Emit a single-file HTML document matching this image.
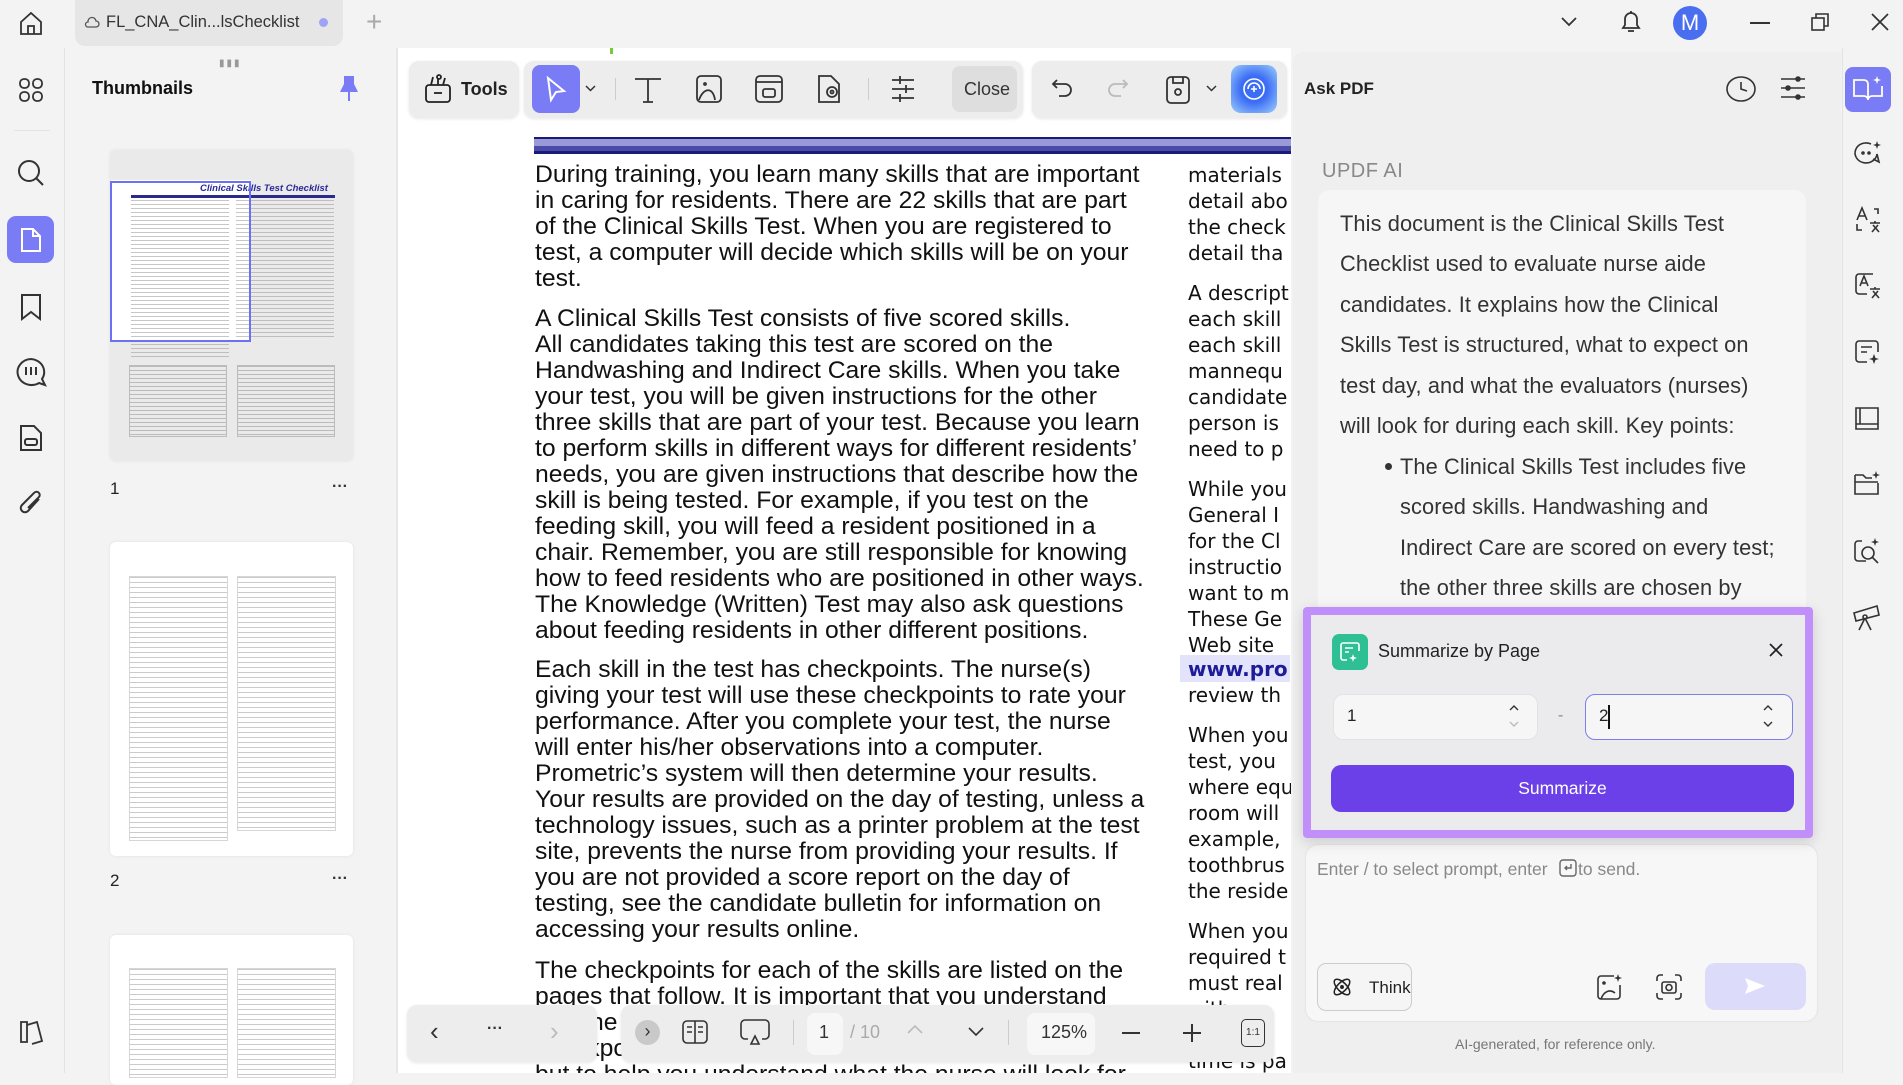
<!DOCTYPE html>
<html><head><meta charset="utf-8"><style>
*{margin:0;padding:0;box-sizing:border-box}
body{width:1903px;height:1073px;overflow:hidden;background:#f3f3f3;font-family:"Liberation Sans",sans-serif;position:relative;color:#222}
.a{position:absolute}
svg{position:absolute;overflow:visible}
.ln{position:absolute;white-space:nowrap;font-size:24px;line-height:26px;color:#111;transform:scaleX(1.03);transform-origin:0 0}
.c2{position:absolute;white-space:nowrap;font-family:"DejaVu Sans",sans-serif;font-size:20px;line-height:26px;color:#111}
.ai{position:absolute;white-space:nowrap;font-size:21.8px;color:#333;letter-spacing:.1px}
.thumb{position:absolute;background:#fff;border-radius:6px;box-shadow:0 0 3px rgba(0,0,0,.08)}
.tx{position:absolute;background:repeating-linear-gradient(#999 0 1px,transparent 1px 4px);opacity:.55}
</style></head><body>
<!-- top bar -->
<svg style="left:18px;top:10px" width="26" height="26" viewBox="0 0 26 26" fill="none" stroke="#333" stroke-width="1.8"><path d="M3 12 L13 3 L23 12 V24 H3 Z"/><path d="M10 24 V16 H16 V24"/></svg>
<div class="a" style="left:75px;top:0;width:268px;height:46px;background:#e6e6e6;border-radius:0 0 10px 10px"></div>
<svg style="left:84px;top:15px" width="16" height="16" viewBox="0 0 16 16" fill="none" stroke="#555" stroke-width="1.3"><path d="M4 12 H12 A3 3 0 0 0 12 6 A4 4 0 0 0 4 7 A2.5 2.5 0 0 0 4 12Z"/></svg>
<div class="a" style="left:106px;top:13px;font-size:16.5px;color:#333">FL_CNA_Clin...lsChecklist</div>
<div class="a" style="left:319px;top:18px;width:9px;height:9px;border-radius:50%;background:#9ea3f5"></div>
<div class="a" style="left:366px;top:6px;font-size:28px;color:#aaa;font-weight:300">+</div>
<svg style="left:1560px;top:16px" width="18" height="12" viewBox="0 0 18 12" fill="none" stroke="#333" stroke-width="1.8"><path d="M2 2 L9 9 L16 2"/></svg>
<svg style="left:1619px;top:9px" width="24" height="26" viewBox="0 0 24 26" fill="none" stroke="#333" stroke-width="1.8"><path d="M4 19 H20 L18 16 V10 A6 6 0 0 0 6 10 V16 Z"/><path d="M9 22 H15"/><path d="M12 2 V4"/></svg>
<div class="a" style="left:1673px;top:6px;width:34px;height:34px;border-radius:50%;background:#4a6ef0;color:#fff;font-size:22px;text-align:center;line-height:34px">M</div>
<div class="a" style="left:1750px;top:22px;width:20px;height:2px;background:#333"></div>
<svg style="left:1810px;top:12px" width="20" height="20" viewBox="0 0 20 20" fill="none" stroke="#333" stroke-width="1.6"><rect x="2" y="6" width="12" height="12"/><path d="M6 6 V2 H18 V14 H14"/></svg>
<svg style="left:1871px;top:13px" width="18" height="18" viewBox="0 0 18 18" stroke="#333" stroke-width="1.8"><path d="M1 1 L17 17 M17 1 L1 17"/></svg>

<!-- left rail -->
<div class="a" style="left:64px;top:48px;width:1px;height:1025px;background:#e3e3e3"></div>
<svg style="left:18px;top:77px" width="26" height="26" viewBox="0 0 26 26" fill="none" stroke="#333" stroke-width="1.8"><rect x="2" y="2" width="9" height="9" rx="4"/><rect x="15" y="2" width="9" height="9" rx="4"/><rect x="2" y="15" width="9" height="9" rx="4"/><rect x="15" y="15" width="9" height="9" rx="4"/></svg>
<div class="a" style="left:14px;top:130px;width:36px;height:1px;background:#e3e3e3"></div>
<svg style="left:16px;top:158px" width="30" height="30" viewBox="0 0 30 30" fill="none" stroke="#333" stroke-width="2"><circle cx="13" cy="13" r="10"/><path d="M20 20 L27 27"/></svg>
<div class="a" style="left:7px;top:216px;width:47px;height:47px;border-radius:9px;background:#7a7cf6"></div>
<svg style="left:18px;top:226px" width="26" height="28" viewBox="0 0 26 28" fill="none" stroke="#fff" stroke-width="2"><path d="M4 3 H15 L22 10 V25 H4 Z"/><path d="M15 3 V10 H22"/></svg>
<svg style="left:19px;top:293px" width="24" height="28" viewBox="0 0 24 28" fill="none" stroke="#333" stroke-width="2"><path d="M3 2 H21 V26 L12 19 L3 26 Z"/></svg>
<svg style="left:14px;top:356px" width="34" height="32" viewBox="0 0 34 32" fill="none" stroke="#333" stroke-width="2"><path d="M17 3 A14 13 0 1 0 25 27 L31 29 L28 23 A14 13 0 0 0 17 3Z"/><path d="M12 11 V19 M17 11 V19 M22 11 V19"/></svg>
<svg style="left:18px;top:424px" width="26" height="28" viewBox="0 0 26 28" fill="none" stroke="#333" stroke-width="2"><path d="M3 2 H16 L23 9 V26 H3 Z"/><rect x="7" y="15" width="12" height="6" rx="2"/></svg>
<svg style="left:17px;top:488px" width="28" height="30" viewBox="0 0 28 30" fill="none" stroke="#333" stroke-width="2"><path d="M22 11 L11 23 A4 4 0 0 1 5 17 L17 5 A3 3 0 0 1 22 9 L11 20"/></svg>
<svg style="left:18px;top:1019px" width="28" height="26" viewBox="0 0 28 26" fill="none" stroke="#333" stroke-width="1.8"><path d="M3 3 V23 H9 V3 Z M9 6 L19 3 L24 22 L14 25"/></svg>

<!-- thumbnails panel -->
<div class="a" style="left:396px;top:48px;width:2px;height:1025px;background:#e6e6e6"></div>
<div class="a" style="left:219px;top:58px;font-size:10px;color:#999;letter-spacing:2px">▮▮▮</div>
<div class="a" style="left:92px;top:78px;font-size:18px;font-weight:bold;color:#111">Thumbnails</div>
<svg style="left:338px;top:74px" width="22" height="30" viewBox="0 0 22 30" fill="#7a7cf6"><path d="M6 2 H16 V10 L20 18 H2 L6 10 Z"/><rect x="10" y="18" width="2" height="9"/></svg>
<div class="thumb" style="left:110px;top:150px;width:243px;height:311px;background:#eaeaea"></div>
<div class="a" style="left:111px;top:180px;width:140px;height:160px;background:#fff"></div>
<div class="a" style="left:200px;top:183px;font-size:9.5px;font-style:italic;font-weight:bold;color:#2a2a9a">Clinical Skills Test Checklist</div>
<div class="a" style="left:131px;top:195px;width:204px;height:3px;background:#2a2a8a"></div>
<div class="tx" style="left:131px;top:200px;width:98px;height:160px"></div>
<div class="tx" style="left:236px;top:200px;width:98px;height:138px"></div>
<div class="a" style="left:129px;top:365px;width:98px;height:72px;border:1px solid #bbb;background:repeating-linear-gradient(#bbb 0 1px,transparent 1px 4px)"></div>
<div class="a" style="left:237px;top:365px;width:98px;height:72px;border:1px solid #bbb;background:repeating-linear-gradient(#bbb 0 1px,transparent 1px 4px)"></div>
<div class="a" style="left:110px;top:181px;width:141px;height:161px;border:2px solid #6c70f2"></div>
<div class="a" style="left:110px;top:479px;font-size:17px;color:#222">1</div>
<div class="a" style="left:332px;top:478px;font-size:16px;color:#333;font-weight:bold">···</div>
<div class="thumb" style="left:110px;top:542px;width:243px;height:314px"></div>
<div class="a" style="left:129px;top:576px;width:99px;height:265px;background:repeating-linear-gradient(#aaa 0 1px,transparent 1px 5px);opacity:.6;border:1px solid #bbb"></div>
<div class="a" style="left:237px;top:576px;width:99px;height:255px;background:repeating-linear-gradient(#aaa 0 1px,transparent 1px 5px);opacity:.6;border:1px solid #bbb"></div>
<div class="a" style="left:110px;top:871px;font-size:17px;color:#222">2</div>
<div class="a" style="left:332px;top:870px;font-size:16px;color:#333;font-weight:bold">···</div>
<div class="thumb" style="left:110px;top:935px;width:243px;height:150px"></div>
<div class="a" style="left:129px;top:968px;width:99px;height:110px;background:repeating-linear-gradient(#aaa 0 1px,transparent 1px 5px);opacity:.6;border:1px solid #bbb"></div>
<div class="a" style="left:237px;top:968px;width:99px;height:110px;background:repeating-linear-gradient(#aaa 0 1px,transparent 1px 5px);opacity:.6;border:1px solid #bbb"></div>

<!-- document -->
<div class="a" style="left:398px;top:48px;width:893px;height:1025px;background:#fff;overflow:hidden">
 <div class="a" style="left:136px;top:89px;width:800px;height:17px;background:linear-gradient(#1a1a7a 0 2px,#9a9ad8 2px 9px,#4b4ba8 9px 14px,#1a1a7a 14px)"></div>
 <div class="a" style="left:212px;top:0;width:3px;height:6px;background:#7c3"></div>
</div>
<div id="doc" class="a" style="left:398px;top:48px;width:893px;height:1025px;overflow:hidden">
<div class="ln" style="left:137px;top:114px">During training, you learn many skills that are important</div>
<div class="ln" style="left:137px;top:140px">in caring for residents. There are 22 skills that are part</div>
<div class="ln" style="left:137px;top:166px">of the Clinical Skills Test. When you are registered to</div>
<div class="ln" style="left:137px;top:192px">test, a computer will decide which skills will be on your</div>
<div class="ln" style="left:137px;top:218px">test.</div>
<div class="ln" style="left:137px;top:258px">A Clinical Skills Test consists of five scored skills.</div>
<div class="ln" style="left:137px;top:284px">All candidates taking this test are scored on the</div>
<div class="ln" style="left:137px;top:310px">Handwashing and Indirect Care skills. When you take</div>
<div class="ln" style="left:137px;top:336px">your test, you will be given instructions for the other</div>
<div class="ln" style="left:137px;top:362px">three skills that are part of your test. Because you learn</div>
<div class="ln" style="left:137px;top:388px">to perform skills in different ways for different residents’</div>
<div class="ln" style="left:137px;top:414px">needs, you are given instructions that describe how the</div>
<div class="ln" style="left:137px;top:440px">skill is being tested. For example, if you test on the</div>
<div class="ln" style="left:137px;top:466px">feeding skill, you will feed a resident positioned in a</div>
<div class="ln" style="left:137px;top:492px">chair. Remember, you are still responsible for knowing</div>
<div class="ln" style="left:137px;top:518px">how to feed residents who are positioned in other ways.</div>
<div class="ln" style="left:137px;top:544px">The Knowledge (Written) Test may also ask questions</div>
<div class="ln" style="left:137px;top:570px">about feeding residents in other different positions.</div>
<div class="ln" style="left:137px;top:609px">Each skill in the test has checkpoints. The nurse(s)</div>
<div class="ln" style="left:137px;top:635px">giving your test will use these checkpoints to rate your</div>
<div class="ln" style="left:137px;top:661px">performance. After you complete your test, the nurse</div>
<div class="ln" style="left:137px;top:687px">will enter his/her observations into a computer.</div>
<div class="ln" style="left:137px;top:713px">Prometric’s system will then determine your results.</div>
<div class="ln" style="left:137px;top:739px">Your results are provided on the day of testing, unless a</div>
<div class="ln" style="left:137px;top:765px">technology issues, such as a printer problem at the test</div>
<div class="ln" style="left:137px;top:791px">site, prevents the nurse from providing your results. If</div>
<div class="ln" style="left:137px;top:817px">you are not provided a score report on the day of</div>
<div class="ln" style="left:137px;top:843px">testing, see the candidate bulletin for information on</div>
<div class="ln" style="left:137px;top:869px">accessing your results online.</div>
<div class="ln" style="left:137px;top:910px">The checkpoints for each of the skills are listed on the</div>
<div class="ln" style="left:137px;top:936px">pages that follow. It is important that you understand</div>
<div class="ln" style="left:137px;top:962px">that the checklists are not written as procedures. These</div>
<div class="ln" style="left:137px;top:988px">checkpoints are important to show you how to perform</div>
<div class="ln" style="left:137px;top:1014px">but to help you understand what the nurse will look for</div>
<div class="c2" style="left:790px;top:114px">materials</div>
<div class="c2" style="left:790px;top:140px">detail abo</div>
<div class="c2" style="left:790px;top:166px">the check</div>
<div class="c2" style="left:790px;top:192px">detail tha</div>
<div class="c2" style="left:790px;top:232px">A descript</div>
<div class="c2" style="left:790px;top:258px">each skill</div>
<div class="c2" style="left:790px;top:284px">each skill</div>
<div class="c2" style="left:790px;top:310px">mannequ</div>
<div class="c2" style="left:790px;top:336px">candidate</div>
<div class="c2" style="left:790px;top:362px">person is</div>
<div class="c2" style="left:790px;top:388px">need to p</div>
<div class="c2" style="left:790px;top:428px">While you</div>
<div class="c2" style="left:790px;top:454px">General I</div>
<div class="c2" style="left:790px;top:480px">for the Cl</div>
<div class="c2" style="left:790px;top:506px">instructio</div>
<div class="c2" style="left:790px;top:532px">want to m</div>
<div class="c2" style="left:790px;top:558px">These Ge</div>
<div class="c2" style="left:790px;top:584px">Web site</div>
<div class="a" style="left:782px;top:607px;width:110px;height:27px;background:#e3e3fb"></div>
<div class="c2" style="left:790px;top:608px;color:#1d1d9a;font-weight:bold">www.pro</div>
<div class="c2" style="left:790px;top:634px">review th</div>
<div class="c2" style="left:790px;top:674px">When you</div>
<div class="c2" style="left:790px;top:700px">test, you</div>
<div class="c2" style="left:790px;top:726px">where equ</div>
<div class="c2" style="left:790px;top:752px">room will</div>
<div class="c2" style="left:790px;top:778px">example,</div>
<div class="c2" style="left:790px;top:804px">toothbrus</div>
<div class="c2" style="left:790px;top:830px">the reside</div>
<div class="c2" style="left:790px;top:870px">When you</div>
<div class="c2" style="left:790px;top:896px">required t</div>
<div class="c2" style="left:790px;top:922px">must real</div>
<div class="c2" style="left:790px;top:948px">with</div>
<div class="c2" style="left:790px;top:974px">eval</div>
<div class="c2" style="left:790px;top:1000px">time is pa</div>
</div>

<!-- top toolbar -->
<div class="a" style="left:409px;top:61px;width:110px;height:57px;background:#ededed;border-radius:10px;box-shadow:0 1px 3px rgba(0,0,0,.1)"></div>
<svg style="left:423px;top:73px" width="30" height="32" viewBox="0 0 30 32" fill="none" stroke="#222" stroke-width="1.8"><rect x="3" y="12" width="24" height="17" rx="3"/><path d="M11 20 H19"/><path d="M8 12 L10 4 M15 12 L15 6 M20 12 L22 5"/><circle cx="16" cy="4" r="2"/></svg>
<div class="a" style="left:461px;top:79px;font-size:18px;font-weight:bold;color:#222">Tools</div>
<div class="a" style="left:524px;top:61px;width:499px;height:57px;background:#ededed;border-radius:10px;box-shadow:0 1px 3px rgba(0,0,0,.1)"></div>
<div class="a" style="left:532px;top:65px;width:48px;height:48px;border-radius:8px;background:#7a7cf6"></div>
<svg style="left:545px;top:75px" width="22" height="28" viewBox="0 0 22 28" fill="none" stroke="#fff" stroke-width="2"><path d="M3 3 L19 16 L11 17 L6 25 Z"/></svg>
<svg style="left:585px;top:85px" width="11" height="7" viewBox="0 0 11 7" fill="none" stroke="#333" stroke-width="1.5"><path d="M1 1 L5.5 5.5 L10 1"/></svg>
<div class="a" style="left:615px;top:78px;width:1px;height:22px;background:#ccc"></div>
<svg style="left:633px;top:76px" width="30" height="28" viewBox="0 0 30 28" fill="none" stroke="#333" stroke-width="1.8"><path d="M2 3 H28 M15 3 V26 M10 26 H20"/></svg>
<svg style="left:695px;top:74px" width="28" height="30" viewBox="0 0 28 30" fill="none" stroke="#333" stroke-width="1.8"><rect x="2" y="2" width="24" height="26" rx="4"/><path d="M4 26 C8 14 18 12 20 26"/><circle cx="10" cy="10" r="1"/></svg>
<svg style="left:754px;top:74px" width="30" height="30" viewBox="0 0 30 30" fill="none" stroke="#333" stroke-width="1.8"><rect x="2" y="2" width="26" height="26" rx="4"/><path d="M2 8 H28"/><rect x="9" y="15" width="12" height="8" rx="2"/></svg>
<svg style="left:815px;top:74px" width="28" height="30" viewBox="0 0 28 30" fill="none" stroke="#333" stroke-width="1.8"><path d="M4 2 H16 L24 10 V28 H4 Z"/><circle cx="17" cy="18" r="5"/><circle cx="17" cy="18" r="1.5"/></svg>
<div class="a" style="left:868px;top:78px;width:1px;height:22px;background:#ccc"></div>
<svg style="left:890px;top:75px" width="26" height="28" viewBox="0 0 26 28" fill="none" stroke="#333" stroke-width="1.8"><path d="M2 5 H24 M2 14 H24 M2 23 H24"/><path d="M10 1 V9 M16 10 V18 M10 19 V27"/></svg>
<div class="a" style="left:952px;top:66px;width:65px;height:46px;border-radius:8px;background:#dedede"></div>
<div class="a" style="left:964px;top:79px;font-size:18px;color:#333">Close</div>
<div class="a" style="left:1032px;top:61px;width:255px;height:57px;background:#ededed;border-radius:10px;box-shadow:0 1px 3px rgba(0,0,0,.1)"></div>
<svg style="left:1051px;top:78px" width="22" height="22" viewBox="0 0 22 22" fill="none" stroke="#333" stroke-width="1.8"><path d="M6 2 L2 6 L6 10 M2 6 H14 A6 6 0 0 1 14 18 H8"/></svg>
<svg style="left:1107px;top:78px" width="22" height="22" viewBox="0 0 22 22" fill="none" stroke="#bbb" stroke-width="1.8"><path d="M16 2 L20 6 L16 10 M20 6 H8 A6 6 0 0 0 8 18 H14"/></svg>
<svg style="left:1165px;top:75px" width="26" height="30" viewBox="0 0 26 30" fill="none" stroke="#333" stroke-width="1.8"><rect x="2" y="2" width="22" height="26" rx="4"/><path d="M8 2 V8 H18 V2"/><circle cx="13" cy="17" r="3"/></svg>
<svg style="left:1206px;top:85px" width="11" height="7" viewBox="0 0 11 7" fill="none" stroke="#333" stroke-width="1.5"><path d="M1 1 L5.5 5.5 L10 1"/></svg>
<div class="a" style="left:1231px;top:65px;width:46px;height:48px;border-radius:10px;background:radial-gradient(circle,#3c6df5 40%,#9fd0fb 100%)"></div>
<svg style="left:1241px;top:76px" width="26" height="26" viewBox="0 0 26 26" fill="none" stroke="#fff" stroke-width="1.6"><circle cx="13" cy="13" r="10"/><path d="M7 13 A6 6 0 0 1 19 13"/><path d="M10 13 H16 M13 10 V16"/></svg>

<!-- bottom nav -->
<div class="a" style="left:407px;top:1005px;width:190px;height:57px;background:#ededed;border-radius:10px;box-shadow:0 1px 3px rgba(0,0,0,.1)"></div>
<div class="a" style="left:430px;top:1016px;font-size:26px;color:#333">‹</div>
<div class="a" style="left:487px;top:1020px;font-size:16px;color:#333;font-weight:bold">···</div>
<div class="a" style="left:550px;top:1016px;font-size:26px;color:#bbb">›</div>
<div class="a" style="left:621px;top:1005px;width:653px;height:57px;background:#ededed;border-radius:10px;box-shadow:0 1px 3px rgba(0,0,0,.1)"></div>
<div class="a" style="left:635px;top:1020px;width:25px;height:25px;border-radius:50%;background:#c9c9c9;color:#333;font-size:18px;text-align:center;line-height:23px">›</div>
<svg style="left:681px;top:1019px" width="28" height="26" viewBox="0 0 28 26" fill="none" stroke="#333" stroke-width="1.6"><rect x="2" y="2" width="24" height="22" rx="4"/><path d="M14 2 V24 M6 8 H11 M6 13 H11 M17 8 H22 M17 13 H22"/></svg>
<svg style="left:739px;top:1018px" width="32" height="28" viewBox="0 0 32 28" fill="none" stroke="#333" stroke-width="1.6"><path d="M9 21 H6 A4 4 0 0 1 2 17 V6 A4 4 0 0 1 6 2 H26 A4 4 0 0 1 30 6 V17 A4 4 0 0 1 26 21 H23"/><path d="M16 18 L12 26 H20 Z"/></svg>
<div class="a" style="left:793px;top:1020px;width:1px;height:25px;background:#ccc"></div>
<div class="a" style="left:807px;top:1013px;width:36px;height:42px;border-radius:8px;background:#f7f7f7"></div>
<div class="a" style="left:819px;top:1022px;font-size:18px;color:#333">1</div>
<div class="a" style="left:850px;top:1022px;font-size:18px;color:#aaa">/ 10</div>
<svg style="left:907px;top:1024px" width="16" height="10" viewBox="0 0 16 10" fill="none" stroke="#bbb" stroke-width="1.6"><path d="M1 9 L8 2 L15 9"/></svg>
<svg style="left:968px;top:1027px" width="16" height="10" viewBox="0 0 16 10" fill="none" stroke="#333" stroke-width="1.6"><path d="M1 1 L8 8 L15 1"/></svg>
<div class="a" style="left:1008px;top:1020px;width:1px;height:25px;background:#ccc"></div>
<div class="a" style="left:1027px;top:1013px;width:68px;height:42px;border-radius:8px;background:#f7f7f7"></div>
<div class="a" style="left:1041px;top:1022px;font-size:18px;color:#333">125%</div>
<div class="a" style="left:1122px;top:1032px;width:18px;height:2px;background:#333"></div>
<div class="a" style="left:1183px;top:1032px;width:18px;height:2px;background:#333"></div>
<div class="a" style="left:1191px;top:1024px;width:2px;height:18px;background:#333"></div>
<div class="a" style="left:1241px;top:1019px;width:24px;height:28px;border:1.6px solid #333;border-radius:5px;font-size:10px;text-align:center;line-height:25px;color:#333">1:1</div>

<!-- Ask PDF panel -->
<div class="a" style="left:1293px;top:52px;width:548px;height:1021px;background:#efeff0;border-radius:10px 0 0 0"></div>
<div class="a" style="left:1304px;top:79px;font-size:17px;font-weight:bold;color:#222">Ask PDF</div>
<svg style="left:1725px;top:74px" width="32" height="30" viewBox="0 0 32 30" fill="none" stroke="#333" stroke-width="1.6"><ellipse cx="16" cy="15" rx="14" ry="12"/><path d="M16 8 V15 L22 17"/></svg>
<svg style="left:1779px;top:74px" width="28" height="28" viewBox="0 0 28 28" fill="none" stroke="#333" stroke-width="1.6"><path d="M2 5 H26 M2 14 H26 M2 23 H26"/><circle cx="19" cy="5" r="2" fill="#333"/><circle cx="9" cy="14" r="2" fill="#333"/><circle cx="19" cy="23" r="2" fill="#333"/></svg>
<div class="a" style="left:1322px;top:160px;font-size:20px;color:#888;letter-spacing:.5px">UPDF AI</div>
<div class="a" style="left:1318px;top:190px;width:488px;height:430px;background:#f6f6f7;border-radius:12px"></div>
<div class="ai" style="left:1340px;top:211px">This document is the Clinical Skills Test</div>
<div class="ai" style="left:1340px;top:251px">Checklist used to evaluate nurse aide</div>
<div class="ai" style="left:1340px;top:292px">candidates. It explains how the Clinical</div>
<div class="ai" style="left:1340px;top:332px">Skills Test is structured, what to expect on</div>
<div class="ai" style="left:1340px;top:373px">test day, and what the evaluators (nurses)</div>
<div class="ai" style="left:1340px;top:413px">will look for during each skill. Key points:</div>
<div class="a" style="left:1385px;top:463px;width:7px;height:7px;border-radius:50%;background:#333"></div>
<div class="ai" style="left:1400px;top:454px">The Clinical Skills Test includes five</div>
<div class="ai" style="left:1400px;top:494px">scored skills. Handwashing and</div>
<div class="ai" style="left:1400px;top:535px">Indirect Care are scored on every test;</div>
<div class="ai" style="left:1400px;top:575px">the other three skills are chosen by</div>

<!-- input card -->
<div class="a" style="left:1306px;top:845px;width:511px;height:176px;background:#f7f7f8;border-radius:12px;box-shadow:0 0 2px rgba(0,0,0,.12)"></div>
<div class="a" style="left:1317px;top:859px;font-size:17.5px;color:#888;white-space:nowrap">Enter / to select prompt, enter</div>
<svg style="left:1559px;top:859px" width="18" height="18" viewBox="0 0 18 18" fill="none" stroke="#666" stroke-width="1.4"><rect x="1" y="1" width="16" height="16" rx="3"/><path d="M12 5 V9 H6 M8 7 L6 9 L8 11"/></svg>
<div class="a" style="left:1578px;top:859px;font-size:17.5px;color:#888;white-space:nowrap">to send.</div>
<div class="a" style="left:1317px;top:963px;width:95px;height:48px;border:1.3px solid #ccc;border-radius:9px;background:#f5f5f5"></div>
<svg style="left:1331px;top:976px" width="22" height="22" viewBox="0 0 22 22" fill="none" stroke="#222" stroke-width="1.5"><ellipse cx="11" cy="11" rx="10" ry="4.5" transform="rotate(45 11 11)"/><ellipse cx="11" cy="11" rx="10" ry="4.5" transform="rotate(-45 11 11)"/><circle cx="11" cy="11" r="1.2" fill="#222"/></svg>
<div class="a" style="left:1369px;top:978px;font-size:17px;color:#222">Think</div>
<svg style="left:1596px;top:973px" width="28" height="28" viewBox="0 0 28 28" fill="none" stroke="#333" stroke-width="1.6"><path d="M18 3 H5 A3 3 0 0 0 2 6 V23 A3 3 0 0 0 5 26 H21 A3 3 0 0 0 24 23 V12"/><path d="M5 26 C8 18 14 16 19 20"/><circle cx="8" cy="10" r="1" fill="#333"/><path d="M22 1 L23 4 L26 5 L23 6 L22 9 L21 6 L18 5 L21 4Z" fill="#333" stroke="none"/></svg>
<svg style="left:1655px;top:973px" width="28" height="28" viewBox="0 0 28 28" fill="none" stroke="#333" stroke-width="1.6"><path d="M2 8 V5 A3 3 0 0 1 5 2 H8 M20 2 H23 A3 3 0 0 1 26 5 V8 M26 20 V23 A3 3 0 0 1 23 26 H20 M8 26 H5 A3 3 0 0 1 2 23 V20"/><rect x="7" y="9" width="14" height="11" rx="2"/><circle cx="14" cy="14.5" r="3"/></svg>
<div class="a" style="left:1705px;top:963px;width:101px;height:47px;border-radius:10px;background:#dcdcfa"></div>
<svg style="left:1744px;top:977px" width="22" height="18" viewBox="0 0 22 18"><path d="M1 1 L21 9 L1 17 L4 9 Z" fill="#fff"/></svg>
<div class="a" style="left:1455px;top:1036px;font-size:14px;color:#777">AI-generated, for reference only.</div>

<!-- summarize popup -->
<div class="a" style="left:1303px;top:607px;width:510px;height:231px;background:#ebebed;border:8px solid #c18ffa;border-radius:4px;box-shadow:0 4px 14px rgba(0,0,0,.15)"></div>
<div class="a" style="left:1332px;top:634px;width:36px;height:36px;border-radius:7px;background:#2ebf94"></div>
<svg style="left:1338px;top:640px" width="24" height="24" viewBox="0 0 24 24" fill="none" stroke="#fff" stroke-width="1.6"><path d="M9 20 H5 A2 2 0 0 1 3 18 V5 A2 2 0 0 1 5 3 H19 A2 2 0 0 1 21 5 V11"/><path d="M7 8 H15 M7 12 H11"/><path d="M15 14 L16 17 L19 18 L16 19 L15 22 L14 19 L11 18 L14 17Z" fill="#fff" stroke="none"/></svg>
<div class="a" style="left:1378px;top:641px;font-size:18px;color:#222">Summarize by Page</div>
<svg style="left:1769px;top:643px" width="14" height="14" viewBox="0 0 14 14" stroke="#222" stroke-width="1.7"><path d="M1 1 L13 13 M13 1 L1 13"/></svg>
<div class="a" style="left:1333px;top:694px;width:205px;height:46px;border-radius:10px;background:#f6f6f7;border:1px solid #e2e2e2"></div>
<div class="a" style="left:1347px;top:706px;font-size:17px;color:#222">1</div>
<svg style="left:1508px;top:703px" width="12" height="26" viewBox="0 0 12 26" fill="none" stroke-width="1.4"><path d="M2 7 L6 3 L10 7" stroke="#333"/><path d="M2 19 L6 23 L10 19" stroke="#bbb"/></svg>
<div class="a" style="left:1558px;top:707px;font-size:16px;color:#888">-</div>
<div class="a" style="left:1585px;top:694px;width:208px;height:46px;border-radius:10px;background:#f6f6f7;border:1.5px solid #7b80ec"></div>
<div class="a" style="left:1599px;top:706px;font-size:17px;color:#222">2</div>
<div class="a" style="left:1608px;top:705px;width:2px;height:24px;background:#111"></div>
<svg style="left:1762px;top:703px" width="12" height="26" viewBox="0 0 12 26" fill="none" stroke="#333" stroke-width="1.4"><path d="M2 7 L6 3 L10 7"/><path d="M2 19 L6 23 L10 19"/></svg>
<div class="a" style="left:1331px;top:765px;width:463px;height:47px;border-radius:10px;background:#6c40e8;color:#fff;font-size:17.5px;text-align:center;line-height:47px">Summarize</div>

<!-- right rail -->
<div class="a" style="left:1842px;top:48px;width:1px;height:1025px;background:#e3e3e3"></div>
<div class="a" style="left:1845px;top:67px;width:46px;height:45px;border-radius:8px;background:#7a7cf6"></div>
<svg style="left:1852px;top:74px" width="32" height="30" viewBox="0 0 32 30" fill="none" stroke="#fff" stroke-width="1.8"><path d="M2 6 H12 A4 4 0 0 1 16 10 V26 A4 4 0 0 0 12 22 H2 Z M30 12 V22 H20 A4 4 0 0 0 16 26"/><path d="M25 2 L26 5 L29 6 L26 7 L25 10 L24 7 L21 6 L24 5Z" fill="#fff" stroke="none"/></svg>
<svg style="left:1853px;top:140px" width="30" height="28" viewBox="0 0 30 28" fill="none" stroke="#333" stroke-width="1.6"><path d="M24 14 A11 10 0 1 1 18 4"/><path d="M24 14 L26 22 L20 19"/><circle cx="10" cy="13" r="1" fill="#333"/><circle cx="16" cy="13" r="1" fill="#333"/><path d="M24 1 L25 4 L28 5 L25 6 L24 9 L23 6 L20 5 L23 4Z" fill="#333" stroke="none"/></svg>
<svg style="left:1854px;top:206px" width="28" height="28" viewBox="0 0 28 28" fill="none" stroke="#333" stroke-width="1.6"><path d="M3 14 L8 2 L13 14 M5 10 H11"/><path d="M3 18 V24 H8 M20 3 H24 V8"/><path d="M16 17 H26 M21 15 V17 M18 26 L24 19 M19 19 L25 26"/></svg>
<svg style="left:1853px;top:271px" width="30" height="30" viewBox="0 0 30 30" fill="none" stroke="#333" stroke-width="1.6"><path d="M20 3 H6 A3 3 0 0 0 3 6 V20 A3 3 0 0 0 6 23 H14"/><path d="M7 15 L11 5 L15 15 M8 12 H14"/><path d="M17 18 H27 M22 16 V18 M19 27 L25 20 M20 20 L26 27"/></svg>
<svg style="left:1853px;top:338px" width="30" height="30" viewBox="0 0 30 30" fill="none" stroke="#333" stroke-width="1.6"><path d="M14 24 H6 A3 3 0 0 1 3 21 V6 A3 3 0 0 1 6 3 H22 A3 3 0 0 1 25 6 V14"/><path d="M8 9 H19 M8 14 H14"/><path d="M21 16 L22.5 20 L26 21 L22.5 22 L21 26 L19.5 22 L16 21 L19.5 20Z" fill="#333" stroke="none"/></svg>
<svg style="left:1853px;top:405px" width="28" height="28" viewBox="0 0 28 28" fill="none" stroke="#333" stroke-width="1.6"><path d="M3 3 V24 H25 V3 Z"/><path d="M3 19 H25"/><path d="M7 3 V19"/></svg>
<svg style="left:1852px;top:469px" width="30" height="30" viewBox="0 0 30 30" fill="none" stroke="#333" stroke-width="1.6"><path d="M3 6 H11 L14 9 H20 M26 14 V25 H3 V6"/><path d="M3 13 H26"/><path d="M24 2 L25 5 L28 6 L25 7 L24 10 L23 7 L20 6 L23 5Z" fill="#333" stroke="none"/></svg>
<svg style="left:1852px;top:536px" width="30" height="30" viewBox="0 0 30 30" fill="none" stroke="#333" stroke-width="1.6"><path d="M14 25 H6 A3 3 0 0 1 3 22 V8 A3 3 0 0 1 6 5 H10"/><circle cx="16" cy="17" r="6"/><path d="M20 21 L26 27"/><path d="M23 2 L24 5 L27 6 L24 7 L23 10 L22 7 L19 6 L22 5Z" fill="#333" stroke="none"/></svg>
<svg style="left:1851px;top:603px" width="32" height="30" viewBox="0 0 32 30" fill="none" stroke="#333" stroke-width="1.6"><path d="M3 10 L26 3 L28 12 L5 18 Z"/><path d="M14 15 L8 27 M14 15 L20 27"/><circle cx="14" cy="14" r="2"/></svg>
</body></html>
